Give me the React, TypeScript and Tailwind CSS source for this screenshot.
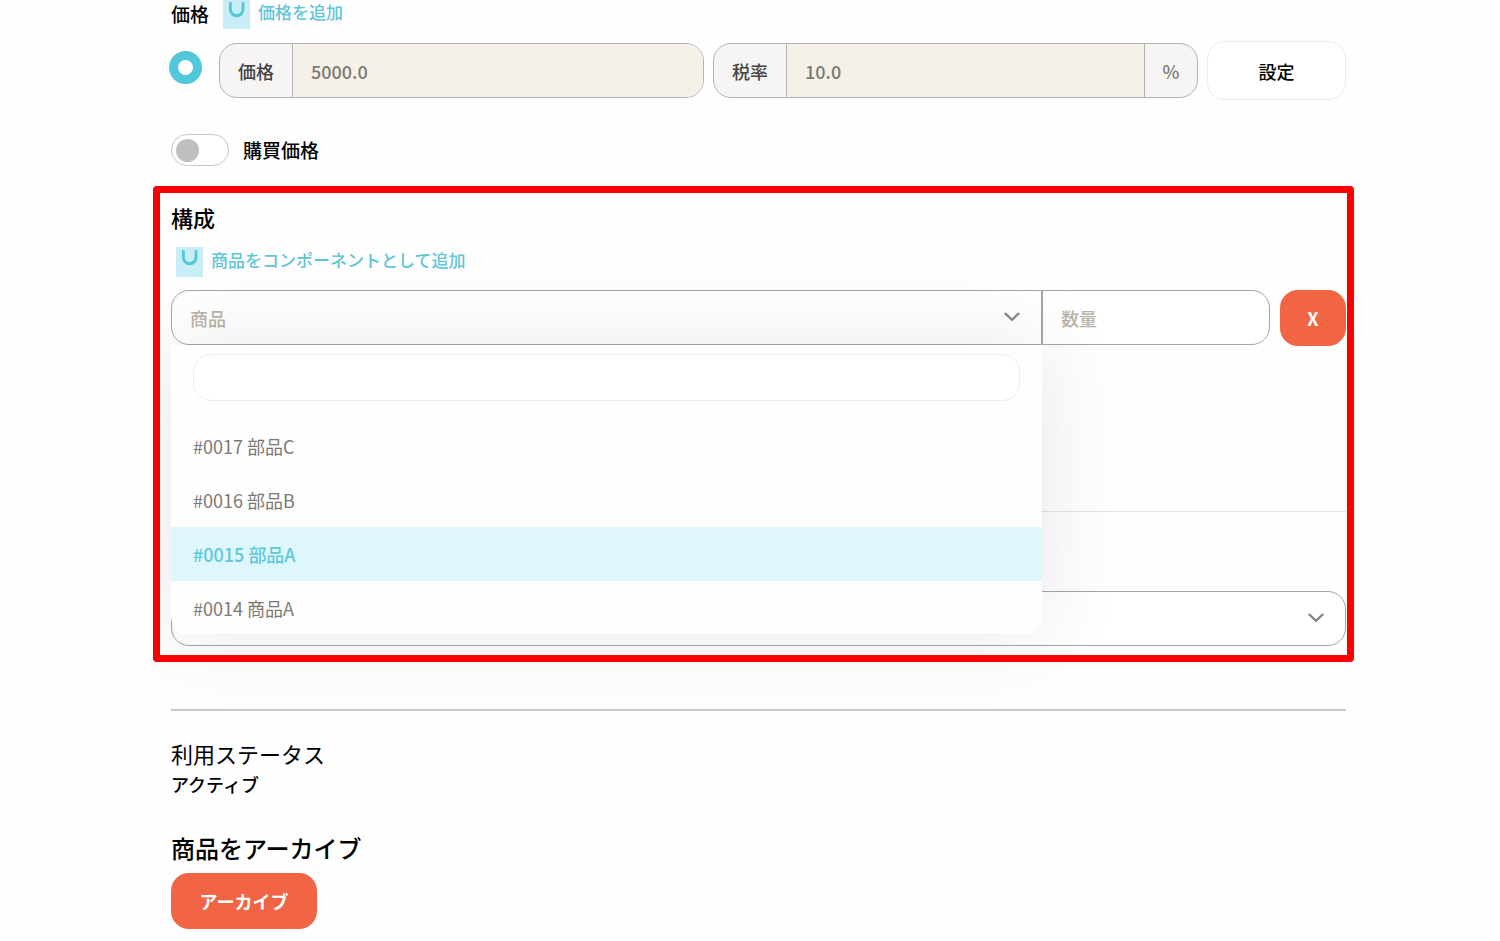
import React, { useState } from "react";

const PRODUCTS = [
  { id: "0017", name: "部品C" },
  { id: "0016", name: "部品B" },
  { id: "0015", name: "部品A" },
  { id: "0014", name: "商品A" },
];

export default function App() {
  const [activeId, setActiveId] = useState("0015");

  return (
    <main className="min-h-screen bg-[#fefefe] pl-[171px] pr-[154px] pb-3 text-lg text-black font-['Noto_Sans_CJK_JP',sans-serif]">
      {/* 価格 */}
      <div className="flex h-[29px] items-end overflow-hidden">
        <h2 className="text-[19px] leading-[30px] font-medium">価格</h2>
        <button type="button" className="ml-3.5 flex gap-2 text-[17px] leading-[26px] font-medium text-[#5ec6d6]">
          <BagIcon />
          価格を追加
        </button>
      </div>

      <div className="mt-3 flex h-[59px] items-center">
        <input
          type="radio"
          name="price"
          defaultChecked
          aria-label="価格"
          className="mb-1.5 -ml-0.5 size-[33px] shrink-0 appearance-none rounded-full border-9 border-[#50c8d9] bg-white"
        />
        <div className="ml-[17px] flex flex-1 gap-[9px]">
          <PriceField id="price" label="価格" value="5000.0" />
          <PriceField id="tax" label="税率" value="10.0" suffix="%" />
        </div>
        <button
          type="button"
          className="ml-[9px] h-[59px] w-[139px] rounded-[18px] border border-[#ececec] bg-white font-medium"
        >
          設定
        </button>
      </div>

      <div className="mt-[34px] flex h-8 items-center gap-3.5">
        <input
          id="purchase"
          type="checkbox"
          role="switch"
          className="flex h-8 w-[58px] appearance-none items-center rounded-full border border-[#c8c8c8] bg-white px-1 before:size-[23px] before:rounded-full before:bg-[#bfbfbf]"
        />
        <label htmlFor="purchase" className="text-[19px] leading-[30px] font-medium">
          購買価格
        </label>
      </div>

      {/* 構成 */}
      <section className="relative mt-5 -mr-2 -ml-[18px] overflow-x-clip pt-4 pr-2 pb-4 pl-[18px]">
        <div className="pointer-events-none absolute inset-0 z-20 rounded border-7 border-[#fb0000]" />

        <h2 className="text-[22px] leading-[30px] font-medium">構成</h2>
        <button
          type="button"
          className="mt-[15px] ml-[5px] flex gap-2 text-[17px] leading-[26px] font-medium text-[#5ec6d6]"
        >
          <BagIcon />
          商品をコンポーネントとして追加
        </button>

        <div className="mt-[13px] flex items-start">
          <div className="relative flex-1">
            <select
              aria-label="商品"
              defaultValue=""
              className="block h-[55px] w-full appearance-none rounded-l-[18px] border border-[#a5a5a5] bg-white pl-[18px] font-medium text-[#b9b4a8]"
            >
              <option value="">商品</option>
            </select>
            <Chevron />
            <ProductMenu activeId={activeId} onSelect={setActiveId} />
          </div>
          <input
            type="text"
            aria-label="数量"
            placeholder="数量"
            className="h-[55px] w-[228px] rounded-r-[18px] border border-[#a5a5a5] bg-white pl-[18px] font-medium placeholder:text-[#b9b4a8]"
          />
          <button type="button" className="ml-2.5 h-14 w-[66px] rounded-[18px] bg-[#f16545] font-bold text-white">
            X
          </button>
        </div>

        <hr className="mt-[165px] border-[#e4e4e4]" />

        <div className="relative mt-[79px]">
          <select
            aria-label="選択"
            className="block h-[55px] w-full appearance-none rounded-[18px] border border-[#a5a5a5] bg-white pl-[18px]"
          />
          <Chevron />
        </div>
      </section>

      <hr className="mt-[47px] border-t-2 border-[#c8c8c8]" />

      <h2 className="mt-[27px] text-[22px] leading-[30px]">利用ステータス</h2>
      <p className="mt-px leading-[30px] font-medium">アクティブ</p>

      <h2 className="mt-[34px] text-2xl leading-[30px] font-medium">商品をアーカイブ</h2>
      <button type="button" className="mt-2.5 h-14 w-[146px] rounded-[18px] bg-[#f16545] font-bold text-white">
        アーカイブ
      </button>
    </main>
  );
}

function PriceField({ id, label, value, suffix }: { id: string; label: string; value: string; suffix?: string }) {
  return (
    <div className="flex h-[55px] flex-1 overflow-hidden rounded-[18px] border border-[#b4b4b4] bg-[#f6f5f3] font-medium">
      <label
        htmlFor={id}
        className="flex w-[73px] shrink-0 items-center justify-center border-r border-[#b4b4b4] text-[#444]"
      >
        {label}
      </label>
      <input id={id} type="text" readOnly value={value} className="w-full min-w-0 bg-[#f5f1e9] pl-[18px] text-[#7c7974]" />
      {suffix && (
        <span className="flex w-[53px] shrink-0 items-center justify-center border-l border-[#b4b4b4] text-[#7c7974]">
          {suffix}
        </span>
      )}
    </div>
  );
}

function ProductMenu({ activeId, onSelect }: { activeId: string; onSelect: (id: string) => void }) {
  return (
    <div className="absolute inset-x-0 top-full z-10 rounded-b-[18px] bg-[#fefefe] pt-[9px] shadow-[0_0_80px_rgba(82,63,105,0.13)]">
      <div className="px-[22px]">
        <input
          type="search"
          aria-label="商品を検索"
          className="block h-[47px] w-full rounded-[18px] border border-[#f1eee6] bg-white px-4"
        />
      </div>
      <ul className="mt-[18px]">
        {PRODUCTS.map((p) => (
          <li key={p.id} className="h-[54px] last:h-[53px]">
            <button
              type="button"
              onClick={() => onSelect(p.id)}
              className={
                p.id === activeId
                  ? "h-full w-full bg-[#ddf7fc] pl-[22px] text-left font-medium text-[#62c8d8]"
                  : "h-full w-full pl-[22px] text-left text-[#7c7974]"
              }
            >
              #{p.id} {p.name}
            </button>
          </li>
        ))}
      </ul>
    </div>
  );
}

function BagIcon() {
  return (
    <svg width="27" height="30" viewBox="0 0 27 30" fill="none" aria-hidden="true" className="shrink-0">
      <rect width="27" height="30" fill="#c9edf4" />
      <path d="M7.4 4.4v6a6.3 6.3 0 0 0 12.6 0v-6" stroke="#50c8d9" strokeWidth="2.9" strokeLinecap="round" />
    </svg>
  );
}

function Chevron() {
  return (
    <svg
      width="16"
      height="10"
      viewBox="0 0 16 10"
      fill="none"
      aria-hidden="true"
      className="pointer-events-none absolute top-[22px] right-[22px]"
    >
      <path d="M1.5 1.6 8 7.9l6.5-6.3" stroke="#8a8782" strokeWidth="2.2" strokeLinecap="round" strokeLinejoin="round" />
    </svg>
  );
}
